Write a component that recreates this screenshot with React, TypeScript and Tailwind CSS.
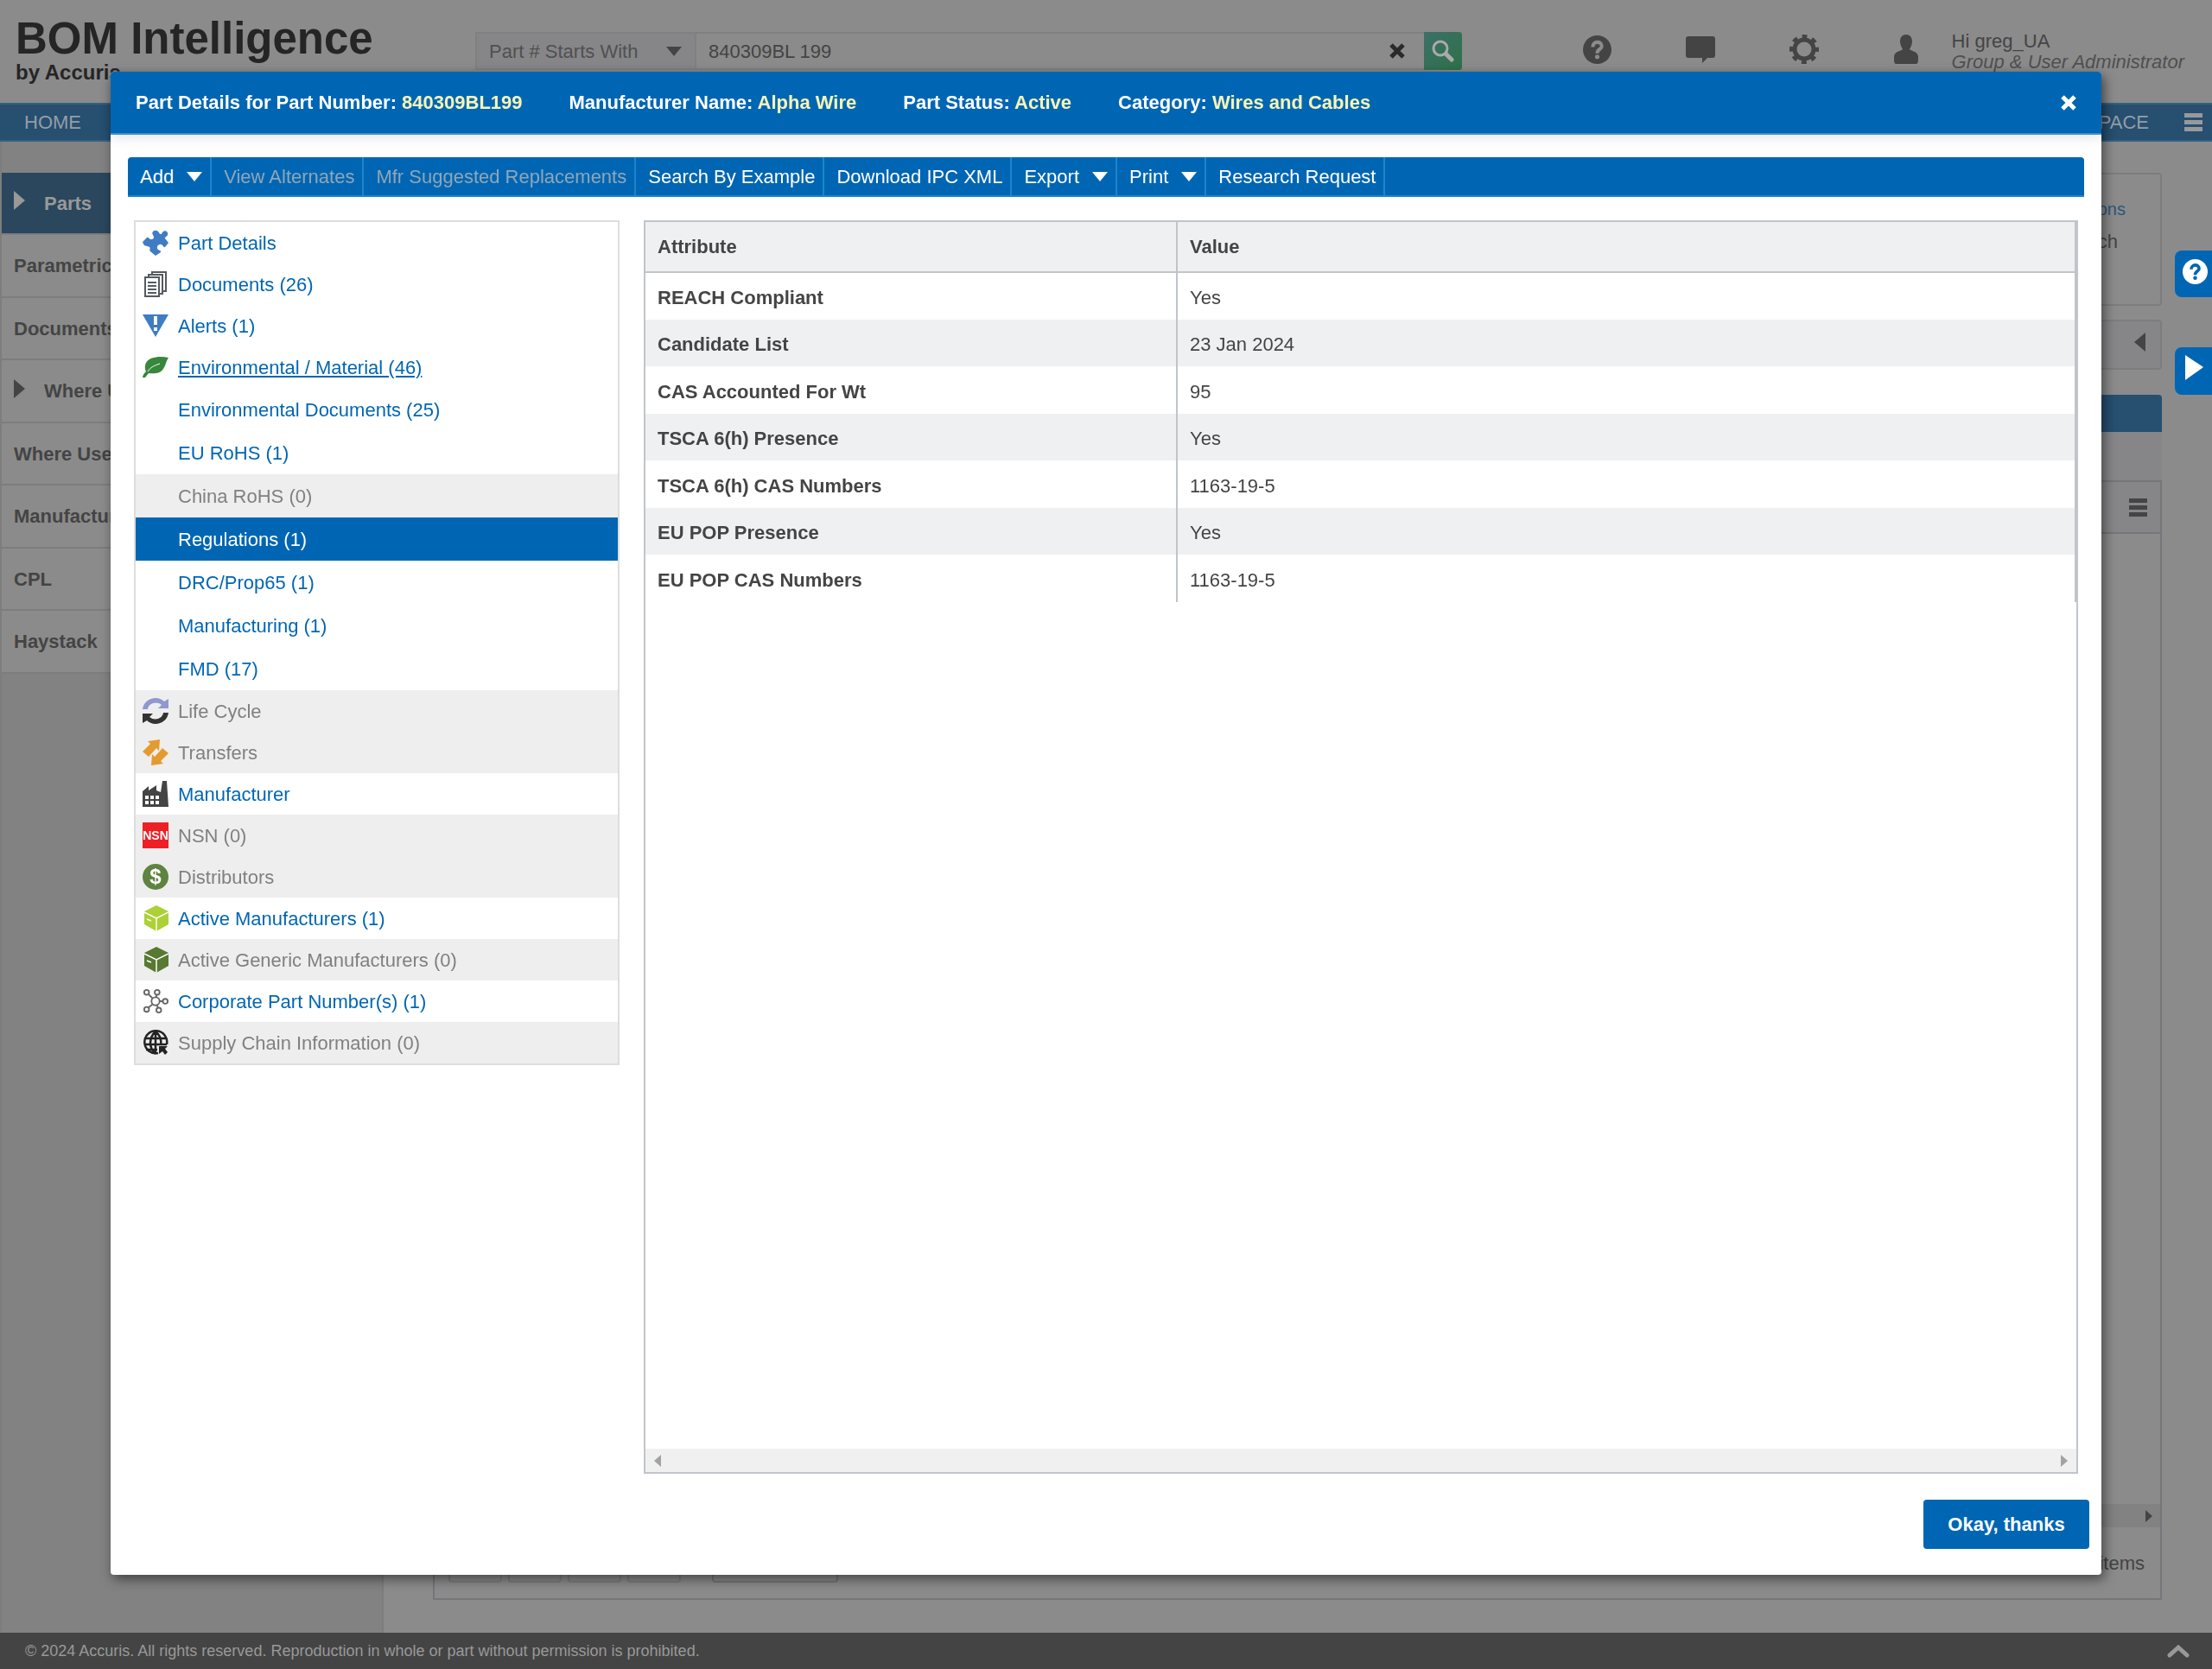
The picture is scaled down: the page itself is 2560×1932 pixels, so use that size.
import { ReactNode } from 'react';

const puzzle = (
  <svg viewBox="0 0 30 30" className="w-[30px] h-[30px] shrink-0">
    <path
      fill="#3f7cc4"
      d="M0 14l5-5c2-1 3 3 6 2s2-3 1-5c-2-3 1-6 4-5 3 0 3 4 5 4 2 0 1-2 3-3 3-2 6 1 5 4-1 2-4 3-3 4l4 5-4 5c-2 1-3-4-6-3-3 0-4 4-2 6 1 1 4 1 3 3l-6 4-6-5c-2-2 1-3-1-5s-6 1-8-6z"
    />
  </svg>
);

const documents = (
  <svg viewBox="0 0 30 30" className="w-[30px] h-[30px] shrink-0" fill="#fff" stroke="#555b60" strokeWidth="2">
    <path d="M11 1h16v22H11z" />
    <path d="M7 4h16v22H7z" />
    <path d="M3 7h16v22H3z" />
    <path d="M6 13h10M6 17h10M6 21h10M6 25h10" />
  </svg>
);

const alert = (
  <svg viewBox="0 0 30 30" className="w-[30px] h-[30px] shrink-0">
    <path fill="#3f7cc4" d="M0 2h30L15 28z" />
    <path stroke="#fff" strokeWidth="4" d="M15 4v10M15 17v4" />
  </svg>
);

const leaf = (
  <svg viewBox="0 0 30 30" className="w-[30px] h-[30px] shrink-0">
    <path fill="#37873c" d="M30 4C20 2 8 3 4 10c-2 4-1 8 0 10-3 3-4 5-4 7h3l4-5c7 1 14 0 17-5 3-4 3-9 6-13z" />
    <path fill="none" stroke="#fff" strokeWidth="1" d="M6 20C9 15 14 13 20 11" />
  </svg>
);

const cycle = (
  <svg viewBox="0 0 30 30" className="w-[30px] h-[30px] shrink-0">
    <path fill="#8f98cf" d="M0 13C1 5 8 0 15 0c4 0 8 2 10 4l5-3v11H18l4-4c-6-5-15-2-16 5z" />
    <path fill="#333" d="M30 17c-1 8-8 13-15 13-4 0-8-2-10-4l-5 3V18h12l-4 4c6 5 15 2 16-5z" />
  </svg>
);

const transfers = (
  <svg viewBox="0 0 30 30" className="w-[30px] h-[30px] shrink-0" fill="#e59a2f">
    <path d="M20 0l-1 13-3-3-9 10-7-6 9-9-3-3z" />
    <path d="M10 30l1-13 3 3 9-10 7 6-9 9 3 3z" />
  </svg>
);

const factory = (
  <svg viewBox="0 0 30 30" className="w-[30px] h-[30px] shrink-0">
    <path fill="#444" d="M0 30V12l7-6v5l9-6v6l5 2 2-13h5l2 30z" />
    <path stroke="#fff" strokeWidth="4" strokeDasharray="4 2" d="M3 19h16M3 25h16" />
  </svg>
);

const nsn = (
  <span className="flex w-[30px] h-[30px] shrink-0 items-center justify-center bg-[#ee1f25] text-[14px] leading-none font-bold text-white">
    NSN
  </span>
);

const dollar = (
  <span className="flex w-[30px] h-[30px] shrink-0 items-center justify-center rounded-full bg-[#5f8340] text-[24px] leading-none font-bold text-white">
    $
  </span>
);

function Box({ fill }: { fill: string }) {
  return (
    <svg viewBox="0 0 30 30" className="w-[30px] h-[30px] shrink-0">
      <path fill={fill} d="M16 0l14 7v15l-14 8-14-8V7z" />
      <path fill="none" stroke="#fff" strokeWidth="1.5" d="M2 8l14 7 14-7M16 15v15M5 16l5 2" />
    </svg>
  );
}

const nodes = (
  <svg viewBox="0 0 32 30" className="w-[30px] h-[30px] shrink-0" fill="none" stroke="#666" strokeWidth="2">
    <circle cx="16" cy="15" r="5" />
    <circle cx="5" cy="4" r="3" />
    <circle cx="18" cy="4" r="3" />
    <circle cx="28" cy="15" r="3" />
    <circle cx="5" cy="25" r="3" />
    <circle cx="20" cy="26" r="3" />
    <path d="M7 6l5 5M17 7v3M21 15h4M7 23l5-4M18 20l1 3" />
  </svg>
);

const globe = (
  <svg viewBox="0 0 30 30" className="w-[30px] h-[30px] shrink-0" fill="none" stroke="#222" strokeWidth="2.5">
    <path d="M18 27A13 13 0 1 1 28 17" />
    <path d="M15 2c-8 7-8 19 0 26M15 2c6 5 7 10 6 15M15 2v26M3 10h24M2 17h26M4 23h13" />
    <path fill="#222" stroke="none" d="M19 19h10l-3 3 3 4-3 3-3-4-4 3z" />
  </svg>
);

type Item = { label: string; icon?: ReactNode; state?: 'off' | 'active' | 'open' };

const items: Item[] = [
  { label: 'Part Details', icon: puzzle },
  { label: 'Documents (26)', icon: documents },
  { label: 'Alerts (1)', icon: alert },
  { label: 'Environmental / Material (46)', icon: leaf, state: 'open' },
  { label: 'Environmental Documents (25)' },
  { label: 'EU RoHS (1)' },
  { label: 'China RoHS (0)', state: 'off' },
  { label: 'Regulations (1)', state: 'active' },
  { label: 'DRC/Prop65 (1)' },
  { label: 'Manufacturing (1)' },
  { label: 'FMD (17)' },
  { label: 'Life Cycle', icon: cycle, state: 'off' },
  { label: 'Transfers', icon: transfers, state: 'off' },
  { label: 'Manufacturer', icon: factory },
  { label: 'NSN (0)', icon: nsn, state: 'off' },
  { label: 'Distributors', icon: dollar, state: 'off' },
  { label: 'Active Manufacturers (1)', icon: <Box fill="#acd136" /> },
  { label: 'Active Generic Manufacturers (0)', icon: <Box fill="#587932" />, state: 'off' },
  { label: 'Corporate Part Number(s) (1)', icon: nodes },
  { label: 'Supply Chain Information (0)', icon: globe, state: 'off' },
];

const itemStyles = {
  link: 'text-[#0066b3]',
  open: 'text-[#0066b3] underline',
  off: 'bg-[#eee] text-[#808080]',
  active: 'bg-[#0066b3] text-white',
};

const attributes = [
  ['REACH Compliant', 'Yes'],
  ['Candidate List', '23 Jan 2024'],
  ['CAS Accounted For Wt', '95'],
  ['TSCA 6(h) Presence', 'Yes'],
  ['TSCA 6(h) CAS Numbers', '1163-19-5'],
  ['EU POP Presence', 'Yes'],
  ['EU POP CAS Numbers', '1163-19-5'],
];

const summary = [
  ['Part Details for Part Number:', '840309BL199'],
  ['Manufacturer Name:', 'Alpha Wire'],
  ['Part Status:', 'Active'],
  ['Category:', 'Wires and Cables'],
];

const tools = [
  { label: 'Add', menu: true },
  { label: 'View Alternates', disabled: true },
  { label: 'Mfr Suggested Replacements', disabled: true },
  { label: 'Search By Example' },
  { label: 'Download IPC XML' },
  { label: 'Export', menu: true },
  { label: 'Print', menu: true },
  { label: 'Research Request' },
];

const sections = [
  { label: 'Parts', arrow: true, current: true },
  { label: 'Parametric' },
  { label: 'Documents' },
  { label: 'Where Used', arrow: true },
  { label: 'Where Used' },
  { label: 'Manufacturer' },
  { label: 'CPL' },
  { label: 'Haystack' },
];

function Down({ className }: { className: string }) {
  return (
    <svg viewBox="0 0 18 11" className={`w-[18px] h-[11px] ${className}`} fill="currentColor">
      <path d="M0 0h18L9 11z" />
    </svg>
  );
}

function Burger({ className }: { className: string }) {
  return (
    <svg viewBox="0 0 21 21" className={`w-[21px] h-[21px] ${className}`} fill="currentColor">
      <path d="M0 0h21v5H0zM0 8h21v5H0zM0 16h21v5H0z" />
    </svg>
  );
}

function Cross({ className }: { className: string }) {
  return (
    <svg viewBox="0 0 18 18" className={`w-[18px] h-[18px] ${className}`} stroke="currentColor" strokeWidth="5">
      <path d="M2 2l14 14M16 2L2 16" />
    </svg>
  );
}

function Help({ className, mark }: { className: string; mark: string }) {
  return (
    <svg viewBox="0 0 32 32" className={className}>
      <circle cx="16" cy="16" r="16" fill="currentColor" />
      <path d="M11 13c0-7 10-7 10-1 0 4-5 3-5 8" fill="none" stroke={mark} strokeWidth="4" />
      <circle cx="16" cy="24" r="2.5" fill={mark} />
    </svg>
  );
}

function TopBar() {
  return (
    <header className="flex h-[119px] justify-between pl-[18px] pr-[32px] text-[#444]">
      <div className="flex">
        <div className="w-[532px] pt-[18px] font-bold text-[#252525]">
          <h1 className="text-[51px] leading-[54px]">BOM Intelligence</h1>
          <p className="text-[24px] leading-[24px]">by Accuris</p>
        </div>
        <form className="mt-[37px] flex h-[44px] w-[1142px] border-2 border-r-0 border-[#808080]">
          <div className="flex w-[254px] items-center border-r-2 border-[#808080] bg-[#868688]">
            <select aria-label="Search type" className="w-[219px] appearance-none pl-[14px] text-[22px] text-[#505050]">
              <option>Part # Starts With</option>
            </select>
            <Down className="text-[#444]" />
          </div>
          <input aria-label="Search" defaultValue="840309BL 199" className="min-w-0 flex-1 px-[14px] text-[22px] text-[#444]" />
          <button type="button" aria-label="Clear" className="w-[62px] pl-[22px]">
            <Cross className="text-[#2a2a2a]" />
          </button>
          <button type="button" aria-label="Find" className="-my-[2px] flex w-[44px] items-center justify-center rounded-r bg-linear-to-br from-[#3d6f68] to-[#2d7148]">
            <svg viewBox="0 0 26 26" className="h-[26px] w-[26px]" fill="none" stroke="#aaa" strokeLinecap="round">
              <circle cx="10" cy="10" r="8" strokeWidth="3" />
              <path d="M17 17l6 6" strokeWidth="5" />
            </svg>
          </button>
        </form>
      </div>
      <div className="flex pt-[36px]">
        <div className="mr-[38px] flex h-[42px] items-center gap-[86px]">
          <Help className="h-[33px] w-[33px]" mark="#8b8b8b" />
          <svg viewBox="0 0 34 32" className="h-[32px] w-[34px]" fill="currentColor">
            <path d="M3 1h28a3 3 0 0 1 3 3v19a3 3 0 0 1-3 3h-6l-6 6v-6H3a3 3 0 0 1-3-3V4a3 3 0 0 1 3-3z" />
          </svg>
          <svg viewBox="0 0 34 34" className="h-[34px] w-[34px]" fill="none" stroke="currentColor">
            <circle cx="17" cy="17" r="11" strokeWidth="5" />
            <circle cx="17" cy="17" r="15" strokeWidth="4" strokeDasharray="5.9 5.9" strokeDashoffset="3" />
          </svg>
          <svg viewBox="0 0 30 34" className="h-[34px] w-[30px]" fill="currentColor">
            <path d="M15 0c5 0 7 4 7 8s-2 7-3 9c1 2 10 2 10 9 0 6 0 8-3 8H4c-3 0-3-2-3-8 0-7 9-7 10-9-1-2-3-5-3-9s2-8 7-8z" />
          </svg>
        </div>
        <div className="text-[22px] leading-[24px]">
          <p>Hi greg_UA</p>
          <p className="text-[#505050] italic">Group &amp; User Administrator</p>
        </div>
      </div>
    </header>
  );
}

function Sidebar() {
  return (
    <nav className="w-[444px] shrink-0 border-r-2 border-l-2 border-[#7d7d7d] bg-[#828282] pt-[36px]">
      {sections.map((s, i) => (
        <a
          key={i}
          href="#"
          className={`flex h-[72px] items-center border-b-2 border-[#7d7d7d] pl-[14px] text-[22px] font-bold even:h-[73px] ${
            s.current ? 'bg-[#2a475d] text-[#999]' : 'bg-[#8b8b8b] text-[#444]'
          }`}
        >
          {s.arrow && (
            <svg viewBox="0 0 13 22" className="-mt-[6px] mr-[22px] h-[22px] w-[13px]" fill="currentColor">
              <path d="M0 0l13 11L0 22z" />
            </svg>
          )}
          {s.label}
        </a>
      ))}
    </nav>
  );
}

function Results() {
  return (
    <main className="flex min-w-0 flex-1 flex-col pt-[36px] pr-[58px] pb-[38px] pl-[57px] text-[22px] text-[#444]">
      <section className="flex h-[154px] flex-col items-end gap-[11px] rounded border-2 border-[#7d7d7d] pt-[26px] text-right">
        <a href="#" className="pr-[40px] text-[20px] leading-[28px] text-[#2c5777]">Options</a>
        <p className="pr-[49px] leading-[26px]">Search</p>
      </section>
      <section className="mt-[16px] flex h-[58px] items-center justify-end rounded border-2 border-[#7d7d7d] bg-[#868688] pr-[17px]">
        <svg viewBox="0 0 13 22" className="-mt-[6px] h-[22px] w-[13px]" fill="currentColor">
          <path d="M13 0v22L0 11z" />
        </svg>
      </section>
      <div className="mt-[29px] h-[43px] rounded-t bg-[#264f70]" />
      <div className="h-[56px] bg-[#868688]" />
      <section className="flex flex-1 flex-col border-2 border-[#75757b]">
        <div className="flex h-[60px] items-center justify-end border-b-2 border-[#75757b] bg-[#868688] pr-[15px]">
          <Burger className="text-[#444]" />
        </div>
        <div className="flex-1" />
        <div className="flex h-[27px] items-center justify-end bg-[#828282] pr-[9px]">
          <svg viewBox="0 0 8 14" className="h-[14px] w-[8px]" fill="currentColor">
            <path d="M0 0l8 7-8 7z" />
          </svg>
        </div>
        <div className="flex h-[82px] items-center justify-between pr-[18px] pl-[16px]">
          <div className="flex gap-[7px]">
            <span className="h-[46px] w-[62px] rounded border-2 border-[#7d7d7d]" />
            <span className="h-[46px] w-[62px] rounded border-2 border-[#7d7d7d]" />
            <span className="h-[46px] w-[62px] rounded border-2 border-[#7d7d7d]" />
            <span className="h-[46px] w-[62px] rounded border-2 border-[#7d7d7d]" />
            <span className="ml-[29px] h-[46px] w-[146px] rounded border-2 border-[#75757b]" />
          </div>
          <p>items</p>
        </div>
      </section>
    </main>
  );
}

function PartDialog() {
  return (
    <div role="dialog" className="flex flex-1 flex-col rounded bg-white text-[22px] shadow-[3px_5px_14px_rgba(0,0,0,0.5)]">
      <header className="flex h-[73px] items-center justify-between rounded-t border-b-2 border-[#3d8fce] bg-[#0066b3] pr-[29px] pl-[29px] font-bold text-white shadow-[0_4px_14px_rgba(0,0,0,0.1)]">
        <div className="flex gap-[54px]">
          {summary.map(([label, value]) => (
            <p key={label}>
              {label} <span className="text-[#f7f5b5]">{value}</span>
            </p>
          ))}
        </div>
        <button type="button" aria-label="Close">
          <Cross className="text-white" />
        </button>
      </header>

      <div className="mx-[20px] mt-[26px] flex h-[46px] rounded-t border-b-2 border-[#1a86cc] bg-[#0066b3]">
        {tools.map((t) => (
          <button
            key={t.label}
            type="button"
            disabled={t.disabled}
            className={`flex items-center gap-[15px] border-r-2 border-[#1a86cc] pr-[9px] pl-[14px] ${
              t.disabled ? 'text-[#8fa6b8]' : 'text-white'
            }`}
          >
            {t.label}
            {t.menu && <Down className="text-white" />}
          </button>
        ))}
      </div>

      <div className="flex flex-1 items-start gap-[28px] pt-[27px] pr-[27px] pl-[27px]">
        <nav className="w-[562px] shrink-0 border-2 border-[#ddd]">
          {items.map((item) => (
            <a
              key={item.label}
              href="#"
              className={`flex items-center gap-[11px] ${item.icon ? 'h-[48px] pl-[8px]' : 'h-[50px] pl-[49px]'} ${
                itemStyles[item.state ?? 'link']
              }`}
            >
              {item.icon}
              {item.label}
            </a>
          ))}
        </nav>

        <section className="flex flex-1 flex-col self-stretch border-2 border-[#c0c5cb]">
          <table className="w-full table-fixed border-collapse text-left text-[#444]">
            <thead>
              <tr className="h-[58px] border-b-2 border-[#c0c5cb] bg-[#eff0f2]">
                <th className="w-[615px] border-r-2 border-[#c0c5cb] pl-[14px]">Attribute</th>
                <th className="border-r-2 border-[#c0c5cb] pl-[14px]">Value</th>
              </tr>
            </thead>
            <tbody>
              {attributes.map(([name, value]) => (
                <tr key={name} className="h-[55px] even:h-[54px] even:bg-[#eff0f2]">
                  <th className="border-r-2 border-[#c0c5cb] pt-[3px] pl-[14px]">{name}</th>
                  <td className="border-r-2 border-[#c0c5cb] pt-[3px] pl-[14px]">{value}</td>
                </tr>
              ))}
            </tbody>
          </table>
          <div className="flex-1" />
          <div className="flex h-[27px] items-center justify-between bg-[#f0f0f0] px-[10px] text-[#a3a3a3]">
            <svg viewBox="0 0 8 14" className="h-[14px] w-[8px]" fill="currentColor">
              <path d="M8 0v14L0 7z" />
            </svg>
            <svg viewBox="0 0 8 14" className="h-[14px] w-[8px]" fill="currentColor">
              <path d="M0 0l8 7-8 7z" />
            </svg>
          </div>
        </section>
      </div>

      <footer className="flex justify-end pt-[30px] pr-[14px] pb-[30px]">
        <button type="button" className="h-[57px] w-[192px] rounded bg-[#0066b3] font-bold text-white">
          Okay, thanks
        </button>
      </footer>
    </div>
  );
}

export default function App() {
  return (
    <div className="flex min-h-screen flex-col bg-[#8b8b8b] font-['Liberation_Sans',Arial,sans-serif]">
      <TopBar />
      <nav className="flex h-[45px] items-center justify-between border-y-2 border-[#35617f] bg-[#264f70] pr-[11px] pl-[28px] text-[22px] text-[#959ea5]">
        <a href="#">HOME</a>
        <div className="flex items-center gap-[41px]">
          <a href="#">WORKSPACE</a>
          <Burger className="text-[#999]" />
        </div>
      </nav>
      <div className="flex flex-1">
        <Sidebar />
        <Results />
      </div>
      <footer className="flex h-[42px] items-center justify-between bg-[#444] pr-[26px] pl-[29px] text-[18px] text-[#999]">
        <p>© 2024 Accuris. All rights reserved. Reproduction in whole or part without permission is prohibited.</p>
        <svg viewBox="0 0 26 16" className="h-[16px] w-[26px]" fill="none" stroke="currentColor" strokeWidth="5" strokeLinecap="round">
          <path d="M3 13L13 4l10 9" />
        </svg>
      </footer>

      <div className="fixed inset-0 flex px-[5%] pt-[83px] pb-[109px]">
        <PartDialog />
      </div>

      <div className="fixed top-[290px] right-0 flex flex-col gap-[58px]">
        <button type="button" aria-label="Help" className="h-[54px] w-[43px] rounded-l-lg bg-[#0066b3] pb-[6px] pl-[9px] text-white">
          <Help className="h-[29px] w-[29px]" mark="#0066b3" />
        </button>
        <button type="button" aria-label="Play" className="h-[55px] w-[43px] rounded-l-lg bg-[#0066b3] pb-[8px] pl-[12px] text-white">
          <svg viewBox="0 0 21 29" className="h-[29px] w-[21px]" fill="currentColor">
            <path d="M0 0l21 14L0 29z" />
          </svg>
        </button>
      </div>
    </div>
  );
}
